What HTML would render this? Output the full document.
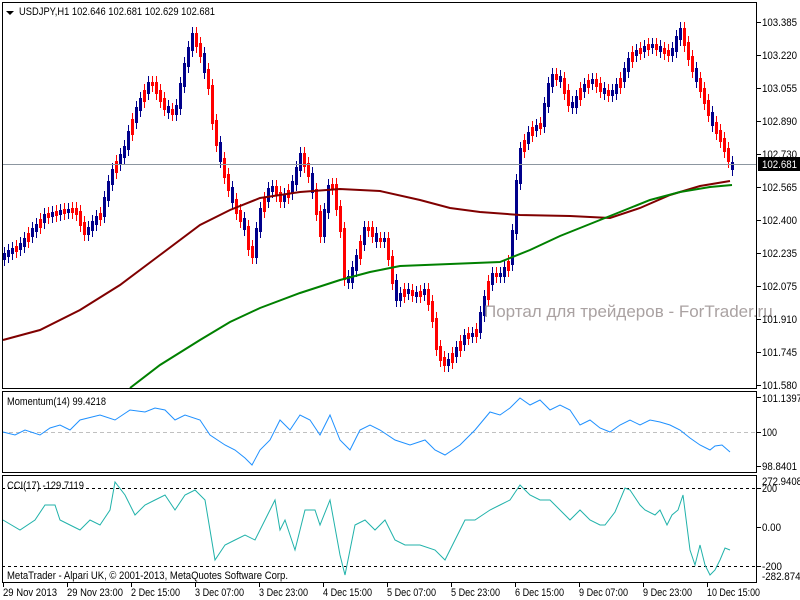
<!DOCTYPE html>
<html><head><meta charset="utf-8"><style>
html,body{margin:0;padding:0;background:#fff;width:800px;height:600px;overflow:hidden}
svg{display:block;font-family:"Liberation Sans","DejaVu Sans",sans-serif}
</style></head><body>
<svg width="800" height="600" xmlns="http://www.w3.org/2000/svg">
<defs>
<marker id="wb" markerUnits="userSpaceOnUse" markerWidth="4" markerHeight="16" refX="0" refY="0" viewBox="-2 -8 4 16" overflow="visible"><line x1="0" y1="-6" x2="0" y2="6" stroke="#00008b" stroke-width="1"/></marker>
<marker id="wr" markerUnits="userSpaceOnUse" markerWidth="4" markerHeight="16" refX="0" refY="0" viewBox="-2 -8 4 16" overflow="visible"><line x1="0" y1="-6" x2="0" y2="6" stroke="#ff0000" stroke-width="1"/></marker>
</defs>
<rect width="800" height="600" fill="#fff"/>
<path fill="none" stroke="#00008b" stroke-width="3" marker-start="url(#wb)" marker-mid="url(#wb)" marker-end="url(#wb)" d="M4.5 253V260M8.5 250V257M12.5 248V254M20.5 243V250M24.5 238V247M32.5 228V237M36.5 224V232M44.5 214V223M52.5 212V217M60.5 210V215M68.5 209V213M88.5 227V235M92.5 221V231M96.5 216V225M104.5 197V217M108.5 181V201M112.5 169V185M120.5 154V165M124.5 146V158M128.5 131V150M136.5 107V123M140.5 98V111M148.5 82V94M168.5 106V113M176.5 105V115M180.5 83V109M184.5 63V87M188.5 47V67M192.5 33V51M204.5 53V73M220.5 142V162M232.5 187V203M244.5 218V230M256.5 228V258M260.5 208V232M268.5 188V202M272.5 186V192M284.5 194V202M292.5 181V194M296.5 167V185M300.5 153V171M312.5 173V193M324.5 209V237M328.5 185V213M348.5 276V283M352.5 267V283M356.5 255V271M364.5 227V245M376.5 233V242M384.5 238V242M396.5 280V301M400.5 293V301M408.5 289V294M416.5 292V297M424.5 289V295M448.5 359V366M456.5 347V357M464.5 335V345M472.5 333V337M480.5 312V333M484.5 296V316M492.5 273V285M500.5 273V277M504.5 267V277M512.5 230V265M516.5 180V234M520.5 148V184M528.5 132V144M536.5 125V131M544.5 103V127M548.5 83V107M552.5 74V87M560.5 76V82M572.5 102V108M576.5 96V108M584.5 84V92M592.5 79V84M604.5 88V94M612.5 90V96M616.5 84V94M624.5 68V82M628.5 58V72M636.5 50V56M644.5 46V52M652.5 44V48M660.5 46V52M672.5 48V56M676.5 36V52M680.5 28V40M696.5 68V82M712.5 112V126M732.5 162V170"/>
<path fill="none" stroke="#ff0000" stroke-width="3" marker-start="url(#wr)" marker-mid="url(#wr)" marker-end="url(#wr)" d="M16.5 246V252M28.5 233V242M40.5 219V228M48.5 213V218M56.5 211V216M64.5 209V214M72.5 208V213M76.5 208V215M80.5 211V226M84.5 222V235M100.5 213V220M116.5 161V173M132.5 119V135M144.5 90V102M152.5 82V86M156.5 82V94M160.5 90V102M164.5 98V110M172.5 109V115M196.5 33V47M200.5 43V57M208.5 69V89M212.5 85V124M216.5 120V146M224.5 158V178M228.5 174V191M236.5 199V214M240.5 210V222M248.5 226V250M252.5 246V258M264.5 198V212M276.5 186V196M280.5 192V202M288.5 190V198M304.5 153V167M308.5 163V177M316.5 189V215M320.5 211V237M332.5 184V189M336.5 184V210M340.5 206V232M344.5 228V280M360.5 241V259M368.5 227V231M372.5 227V237M380.5 238V242M388.5 238V260M392.5 256V284M404.5 289V297M412.5 290V296M420.5 291V297M428.5 289V305M432.5 301V322M436.5 318V350M440.5 346V361M444.5 357V366M452.5 353V363M460.5 341V351M468.5 333V339M476.5 329V337M488.5 281V300M496.5 273V277M508.5 261V271M524.5 140V152M532.5 127V136M540.5 123V129M556.5 74V80M564.5 78V94M568.5 90V106M580.5 88V100M588.5 80V88M596.5 79V87M600.5 83V92M608.5 90V96M620.5 78V88M632.5 52V62M640.5 48V54M648.5 44V50M656.5 44V50M664.5 48V54M668.5 50V56M684.5 28V46M688.5 42V60M692.5 56V72M700.5 78V92M704.5 88V104M708.5 100V116M716.5 122V134M720.5 130V142M724.5 138V152M728.5 148V162"/>
<line x1="2" y1="164.5" x2="757" y2="164.5" stroke="#8c96a0"/>
<polyline fill="none" stroke="#800000" stroke-width="2" points="3,340 40,330 80,310 120,285 160,255 200,225 230,210 260,198 300,192 340,189 380,191 420,200 450,208 480,212 520,215 570,216 610,218 640,208 670,195 700,186 730,181"/>
<polyline fill="none" stroke="#008000" stroke-width="2" points="130,388 160,365 200,340 230,322 260,308 300,293 340,280 370,272 400,266 450,264 500,262 530,250 560,236 590,224 620,212 650,200 680,192 710,187 732,185"/>
<text x="484" y="317" font-size="17" fill="#aaa2a2">Портал для трейдеров - ForTrader.ru</text>
<line x1="2" y1="432.5" x2="757" y2="432.5" stroke="#c0c0c0" stroke-dasharray="4,3"/>
<polyline fill="none" stroke="#1e90ff" stroke-width="1" points="3,432 15,435 25,430 40,435 50,428 60,425 70,430 80,420 100,415 115,420 130,410 145,412 155,408 165,410 175,420 185,415 200,420 210,435 225,445 235,450 245,458 252,465 260,450 270,440 280,420 290,430 300,415 310,420 320,435 330,415 340,440 350,450 360,430 370,425 380,430 395,440 410,445 425,440 435,450 445,455 460,445 475,430 490,412 500,415 510,408 520,398 530,405 540,400 550,410 560,405 570,410 580,425 590,420 600,428 610,432 620,425 630,420 640,425 650,420 660,422 670,425 680,430 690,438 700,445 710,450 715,446 722,445 730,452"/>
<line x1="2" y1="488.5" x2="757" y2="488.5" stroke="#000" stroke-dasharray="3,3"/>
<line x1="2" y1="566.5" x2="757" y2="566.5" stroke="#000" stroke-dasharray="3,3"/>
<polyline fill="none" stroke="#20b2aa" stroke-width="1" points="3,520 20,530 35,520 45,505 55,505 60,520 70,525 80,530 90,520 100,525 110,510 115,482 125,495 135,515 145,505 155,500 165,495 175,510 185,495 195,490 205,500 210,530 215,560 225,545 235,540 245,535 255,540 265,520 275,500 280,530 285,520 295,550 305,510 315,510 320,525 330,500 340,555 345,575 355,525 365,520 375,530 385,520 395,540 405,545 420,545 435,550 445,560 455,540 465,520 475,520 490,510 500,505 510,500 520,485 530,495 540,500 550,500 560,510 570,520 580,510 590,520 600,525 605,525 615,512 625,488 630,490 640,505 645,510 655,515 660,510 667,525 672,515 678,510 683,495 690,550 695,565 700,545 705,565 710,575 715,570 720,560 725,548 730,550"/>
<rect x="2.5" y="2.5" width="754" height="386" fill="none" stroke="#000"/>
<rect x="2.5" y="391.5" width="754" height="81" fill="none" stroke="#000"/>
<rect x="2.5" y="475.5" width="754" height="107" fill="none" stroke="#000"/>
<path d="M6 11 L14 11 L10 15 Z" fill="#000"/>
<g font-size="11" fill="#000" lengthAdjust="spacingAndGlyphs">
<text x="19" y="15" textLength="196" lengthAdjust="spacingAndGlyphs">USDJPY,H1  102.646 102.681 102.629 102.681</text>
<text x="7" y="405" textLength="99" lengthAdjust="spacingAndGlyphs">Momentum(14) 99.4218</text>
<text x="7" y="489" textLength="77" lengthAdjust="spacingAndGlyphs">CCI(17) -129.7119</text>
<text x="7" y="579" textLength="281" lengthAdjust="spacingAndGlyphs">MetaTrader - Alpari UK, © 2001-2013, MetaQuotes Software Corp.</text>
<text x="762" y="26" textLength="35" lengthAdjust="spacingAndGlyphs">103.385</text><text x="762" y="59" textLength="35" lengthAdjust="spacingAndGlyphs">103.220</text><text x="762" y="92" textLength="35" lengthAdjust="spacingAndGlyphs">103.055</text><text x="762" y="125" textLength="35" lengthAdjust="spacingAndGlyphs">102.890</text><text x="762" y="158" textLength="35" lengthAdjust="spacingAndGlyphs">102.730</text><text x="762" y="191" textLength="35" lengthAdjust="spacingAndGlyphs">102.565</text><text x="762" y="224" textLength="35" lengthAdjust="spacingAndGlyphs">102.400</text><text x="762" y="257" textLength="35" lengthAdjust="spacingAndGlyphs">102.235</text><text x="762" y="290" textLength="35" lengthAdjust="spacingAndGlyphs">102.075</text><text x="762" y="323" textLength="35" lengthAdjust="spacingAndGlyphs">101.910</text><text x="762" y="356" textLength="35" lengthAdjust="spacingAndGlyphs">101.745</text><text x="762" y="389" textLength="35" lengthAdjust="spacingAndGlyphs">101.580</text>
<text x="762" y="402" textLength="40" lengthAdjust="spacingAndGlyphs">101.1397</text><text x="762" y="436" textLength="15" lengthAdjust="spacingAndGlyphs">100</text><text x="762" y="470" textLength="35" lengthAdjust="spacingAndGlyphs">98.8401</text>
<text x="762" y="485" textLength="40" lengthAdjust="spacingAndGlyphs">272.9408</text><text x="762" y="492" textLength="15" lengthAdjust="spacingAndGlyphs">200</text><text x="762" y="531" textLength="19" lengthAdjust="spacingAndGlyphs">0.00</text><text x="762" y="570" textLength="20" lengthAdjust="spacingAndGlyphs">-200</text><text x="762" y="580" textLength="44" lengthAdjust="spacingAndGlyphs">-282.8745</text>
<text x="3" y="596" textLength="54" lengthAdjust="spacingAndGlyphs">29 Nov 2013</text><text x="67" y="596" textLength="56" lengthAdjust="spacingAndGlyphs">29 Nov 23:00</text><text x="131" y="596" textLength="49" lengthAdjust="spacingAndGlyphs">2 Dec 15:00</text><text x="195" y="596" textLength="49" lengthAdjust="spacingAndGlyphs">3 Dec 07:00</text><text x="259" y="596" textLength="49" lengthAdjust="spacingAndGlyphs">3 Dec 23:00</text><text x="323" y="596" textLength="49" lengthAdjust="spacingAndGlyphs">4 Dec 15:00</text><text x="387" y="596" textLength="49" lengthAdjust="spacingAndGlyphs">5 Dec 07:00</text><text x="451" y="596" textLength="49" lengthAdjust="spacingAndGlyphs">5 Dec 23:00</text><text x="515" y="596" textLength="49" lengthAdjust="spacingAndGlyphs">6 Dec 15:00</text><text x="579" y="596" textLength="49" lengthAdjust="spacingAndGlyphs">9 Dec 07:00</text><text x="643" y="596" textLength="49" lengthAdjust="spacingAndGlyphs">9 Dec 23:00</text><text x="707" y="596" textLength="53" lengthAdjust="spacingAndGlyphs">10 Dec 15:00</text>
</g>
<rect x="758" y="157" width="42" height="14" fill="#000"/>
<text x="762" y="168" font-size="11" fill="#fff" textLength="35" lengthAdjust="spacingAndGlyphs">102.681</text>
<path stroke="#000" fill="none" d="M3.5 583V587M67.5 583V587M131.5 583V587M195.5 583V587M259.5 583V587M323.5 583V587M387.5 583V587M451.5 583V587M515.5 583V587M579.5 583V587M643.5 583V587M707.5 583V587M757 22.5H761M757 55.5H761M757 88.5H761M757 121.5H761M757 154.5H761M757 187.5H761M757 220.5H761M757 253.5H761M757 286.5H761M757 319.5H761M757 352.5H761M757 385.5H761M757 397.5H761M757 432.5H761M757 466.5H761M757 488.5H761M757 527.5H761M757 566.5H761"/>
</svg>
</body></html>
